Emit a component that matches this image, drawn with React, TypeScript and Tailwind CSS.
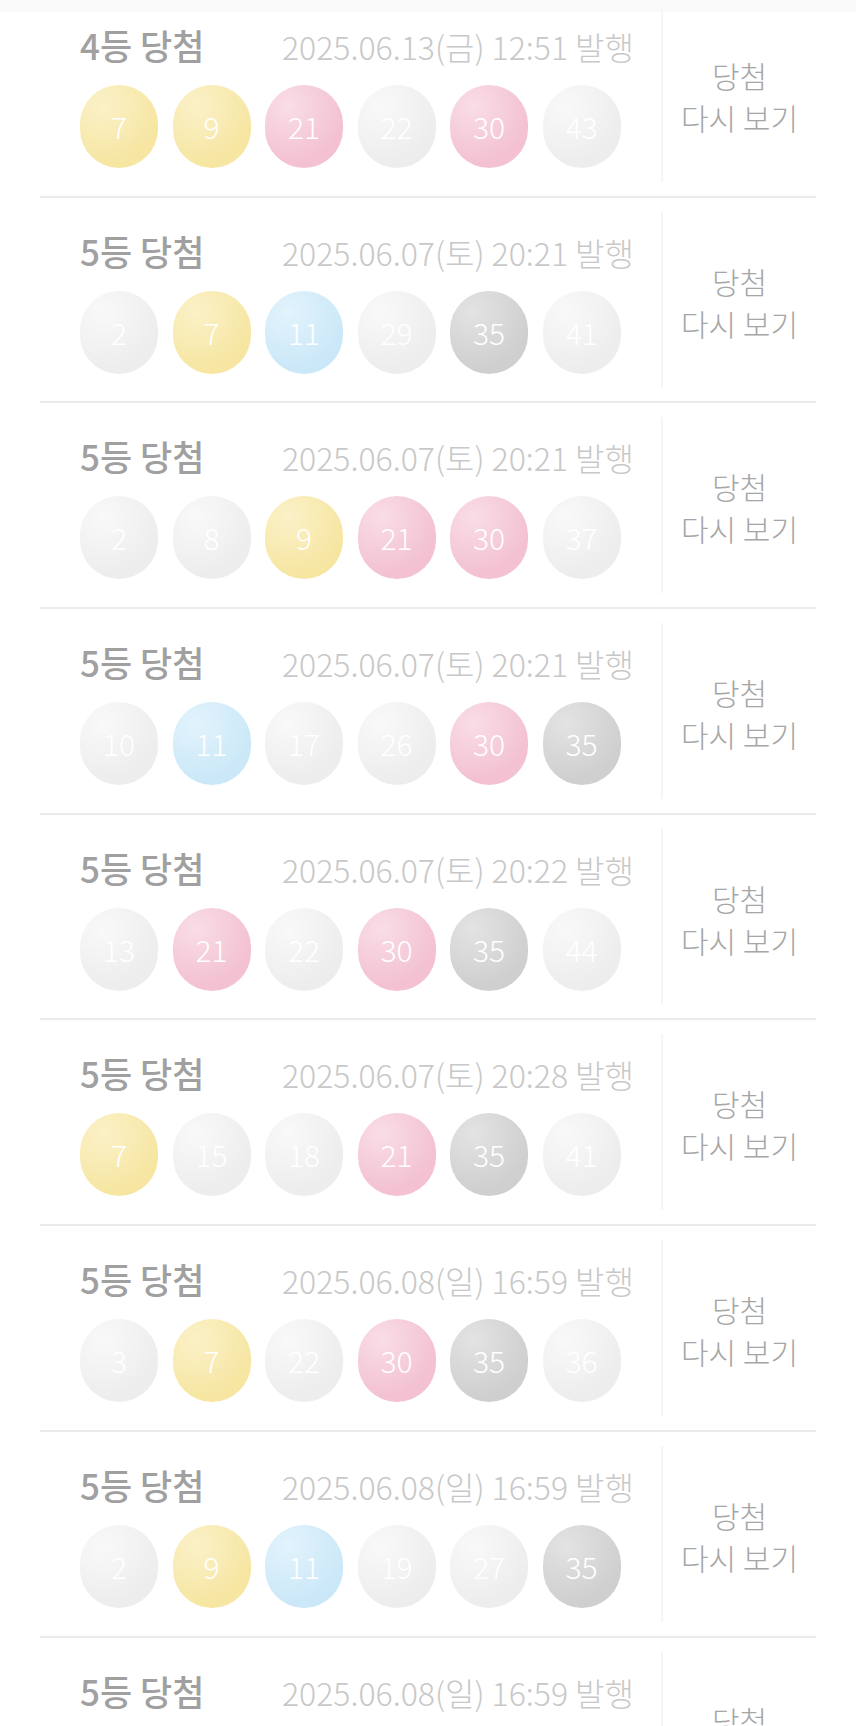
import React from "react";

const WINNING = [7, 9, 11, 21, 30, 35];

const tickets = [
  { rank: "4등 당첨", issued: "2025.06.13(금) 12:51 발행", nums: [7, 9, 21, 22, 30, 43] },
  { rank: "5등 당첨", issued: "2025.06.07(토) 20:21 발행", nums: [2, 7, 11, 29, 35, 41] },
  { rank: "5등 당첨", issued: "2025.06.07(토) 20:21 발행", nums: [2, 8, 9, 21, 30, 37] },
  { rank: "5등 당첨", issued: "2025.06.07(토) 20:21 발행", nums: [10, 11, 17, 26, 30, 35] },
  { rank: "5등 당첨", issued: "2025.06.07(토) 20:22 발행", nums: [13, 21, 22, 30, 35, 44] },
  { rank: "5등 당첨", issued: "2025.06.07(토) 20:28 발행", nums: [7, 15, 18, 21, 35, 41] },
  { rank: "5등 당첨", issued: "2025.06.08(일) 16:59 발행", nums: [3, 7, 22, 30, 35, 36] },
  { rank: "5등 당첨", issued: "2025.06.08(일) 16:59 발행", nums: [2, 9, 11, 19, 27, 35] },
  { rank: "5등 당첨", issued: "2025.06.08(일) 16:59 발행", nums: [1, 7, 21, 30, 35, 42] },
];

const font = "font-['Noto_Sans_CJK_KR','Noto_Sans',sans-serif]";

// matched numbers get the lotto colour, the rest stay pale grey
function ballClass(n: number) {
  if (!WINNING.includes(n))
    return "bg-[radial-gradient(circle_at_30%_25%,#f9f9f9,#ededed_70%)]";
  if (n <= 10) return "bg-[radial-gradient(circle_at_30%_25%,#fbf1c8,#f6e6a2_70%)]";
  if (n <= 20) return "bg-[radial-gradient(circle_at_30%_25%,#e2f3fc,#cbe8f8_70%)]";
  if (n <= 30) return "bg-[radial-gradient(circle_at_30%_25%,#f9dde7,#f3c1d1_70%)]";
  return "bg-[radial-gradient(circle_at_30%_25%,#e3e3e3,#cfcfcf_70%)]";
}

function Ball({ n }: { n: number }) {
  return (
    <div
      className={`w-[78px] h-[83px] rounded-full flex items-center justify-center text-white text-[30px] font-light ${ballClass(n)}`}
    >
      {n}
    </div>
  );
}

function TicketRow({ t }: { t: (typeof tickets)[number] }) {
  return (
    <div className="h-[205.7px] border-b-2 border-[#ebebeb] flex">
      <div className="w-[621px] pl-[40px] pt-[33px]">
        <div className="w-[554px] flex items-baseline justify-between">
          <span className="text-[35px] leading-[40px] font-medium text-[#a0a0a0]">{t.rank}</span>
          <span className="text-[32px] leading-[40px] font-light text-[#c8c8c8]">{t.issued}</span>
        </div>
        <div className="mt-[19px] flex gap-[14.5px]">
          {t.nums.map((n, i) => (
            <Ball key={i} n={n} />
          ))}
        </div>
      </div>
      <div className="flex-1 my-[14px] border-l-2 border-[#f5f5f5] flex flex-col items-center justify-center pt-[4px] text-[30px] leading-[42px] font-light text-[#a6a6a6]">
        <span>당첨</span>
        <span>다시 보기</span>
      </div>
    </div>
  );
}

export default function App() {
  return (
    <div className={`w-[856px] h-[1726px] overflow-hidden bg-white ${font}`}>
      <div className="h-[12px] bg-[#fafafa]" />
      <div className="-mt-[20px] mx-[40px]">
        {tickets.map((t, i) => (
          <TicketRow key={i} t={t} />
        ))}
      </div>
    </div>
  );
}
